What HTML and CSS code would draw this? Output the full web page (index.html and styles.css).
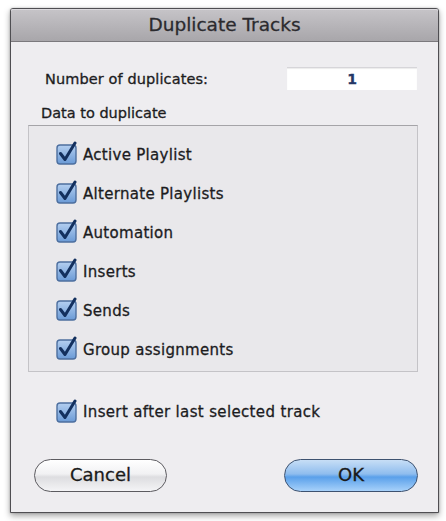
FILE: index.html
```html
<!DOCTYPE html>
<html>
<head>
<meta charset="utf-8">
<link rel="stylesheet" href="styles.css">
</head>
<body>
<div class="window">
  <div class="titlebar">Duplicate Tracks</div>
  <div class="content">
    <div class="num-row">
      <span class="num-label">Number of duplicates:</span>
      <div class="num-input">1</div>
    </div>
    <div class="section-label">Data to duplicate</div>
    <div class="group">
      <div class="check-row"><svg class="cb" viewBox="0 0 22 24" width="22" height="24"><defs><linearGradient id="g1" x1="0" y1="0" x2="0" y2="1"><stop offset="0" stop-color="#b4cff0"/><stop offset="1" stop-color="#6a9ad6"/></linearGradient></defs><rect x="1" y="4" width="19" height="19" rx="3" fill="url(#g1)" stroke="#4d6f9f" stroke-width="1.4"/><path d="M4.5 12.5 L9 18.5 L19 2" fill="none" stroke="#13305e" stroke-width="3" stroke-linecap="round" stroke-linejoin="round"/></svg><span>Active Playlist</span></div>
      <div class="check-row"><svg class="cb" viewBox="0 0 22 24" width="22" height="24"><rect x="1" y="4" width="19" height="19" rx="3" fill="url(#g1)" stroke="#4d6f9f" stroke-width="1.4"/><path d="M4.5 12.5 L9 18.5 L19 2" fill="none" stroke="#13305e" stroke-width="3" stroke-linecap="round" stroke-linejoin="round"/></svg><span>Alternate Playlists</span></div>
      <div class="check-row"><svg class="cb" viewBox="0 0 22 24" width="22" height="24"><rect x="1" y="4" width="19" height="19" rx="3" fill="url(#g1)" stroke="#4d6f9f" stroke-width="1.4"/><path d="M4.5 12.5 L9 18.5 L19 2" fill="none" stroke="#13305e" stroke-width="3" stroke-linecap="round" stroke-linejoin="round"/></svg><span>Automation</span></div>
      <div class="check-row"><svg class="cb" viewBox="0 0 22 24" width="22" height="24"><rect x="1" y="4" width="19" height="19" rx="3" fill="url(#g1)" stroke="#4d6f9f" stroke-width="1.4"/><path d="M4.5 12.5 L9 18.5 L19 2" fill="none" stroke="#13305e" stroke-width="3" stroke-linecap="round" stroke-linejoin="round"/></svg><span>Inserts</span></div>
      <div class="check-row"><svg class="cb" viewBox="0 0 22 24" width="22" height="24"><rect x="1" y="4" width="19" height="19" rx="3" fill="url(#g1)" stroke="#4d6f9f" stroke-width="1.4"/><path d="M4.5 12.5 L9 18.5 L19 2" fill="none" stroke="#13305e" stroke-width="3" stroke-linecap="round" stroke-linejoin="round"/></svg><span>Sends</span></div>
      <div class="check-row"><svg class="cb" viewBox="0 0 22 24" width="22" height="24"><rect x="1" y="4" width="19" height="19" rx="3" fill="url(#g1)" stroke="#4d6f9f" stroke-width="1.4"/><path d="M4.5 12.5 L9 18.5 L19 2" fill="none" stroke="#13305e" stroke-width="3" stroke-linecap="round" stroke-linejoin="round"/></svg><span>Group assignments</span></div>
    </div>
    <div class="check-row insert-row"><svg class="cb" viewBox="0 0 22 24" width="22" height="24"><rect x="1" y="4" width="19" height="19" rx="3" fill="url(#g1)" stroke="#4d6f9f" stroke-width="1.4"/><path d="M4.5 12.5 L9 18.5 L19 2" fill="none" stroke="#13305e" stroke-width="3" stroke-linecap="round" stroke-linejoin="round"/></svg><span class="small">Insert after last selected track</span></div>
    <div class="buttons">
      <div class="btn cancel">Cancel</div>
      <div class="btn ok">OK</div>
    </div>
  </div>
</div>
</body>
</html>
```
FILE: styles.css
```css
html, body {
  margin: 0;
  padding: 0;
  background: #ffffff;
}
body {
  font-family: "DejaVu Sans", "Liberation Sans", sans-serif;
  color: #1c1c1e;
  width: 446px;
  height: 521px;
  overflow: hidden;
  -webkit-text-stroke: 0.3px currentColor;
}
.window {
  margin: 8px 0 0 10px;
  width: 427px;
  height: 503px;
  border: 1px solid #4f4e52;
  border-radius: 3px 3px 0 0;
  background: #eeedf0;
  box-shadow: 0 3px 6px rgba(0,0,0,0.35), 0 0 2px rgba(0,0,0,0.25);
  display: flex;
  flex-direction: column;
}
.titlebar {
  height: 32px;
  line-height: 32px;
  text-align: center;
  font-size: 18.5px;
  color: #2b2a2e;
  background: linear-gradient(#c6c4c8, #a8a6aa);
  border-bottom: 1px solid #7b797d;
  border-radius: 2px 2px 0 0;
  box-shadow: inset 0 1px 0 #dcdade;
}
.content {
  display: flex;
  flex-direction: column;
  flex: 1;
}
.num-row {
  display: flex;
  align-items: center;
  margin-top: 25px;
  height: 23px;
}
.num-label {
  margin-left: 34px;
  font-size: 14.5px;
  letter-spacing: 0.1px;
}
.num-input {
  margin-left: auto;
  margin-right: 21px;
  width: 130px;
  height: 23px;
  line-height: 23px;
  background: #ffffff;
  border-top: 1px solid #d6d5d9;
  box-sizing: border-box;
  text-align: center;
  font-size: 14px;
  font-weight: bold;
  color: #253766;
  box-shadow: inset 0 1px 1px rgba(0,0,0,0.08);
}
.section-label {
  margin-top: 14px;
  margin-left: 30px;
  height: 18px;
  line-height: 18px;
  font-size: 14.5px;
}
.group {
  margin-top: 3px;
  margin-left: 17px;
  width: 390px;
  height: 247px;
  box-sizing: border-box;
  border: 1px solid #c4c3c7;
  border-top-color: #a5a4a8;
  background: #e9e8eb;
  padding-top: 9px;
  padding-left: 28px;
  display: flex;
  flex-direction: column;
}
.check-row {
  display: flex;
  align-items: center;
  height: 39px;
  font-size: 15px;
  letter-spacing: 0.3px;
}
.cb {
  flex: none;
  margin-left: -1px;
  margin-top: -3px;
  margin-right: 5px;
  -webkit-text-stroke: 0;
}
.insert-row {
  margin-top: 29px;
  margin-left: 46px;
  height: 22px;
}
.small {
  font-size: 15px;
  letter-spacing: 0.35px;
}
.buttons {
  display: flex;
  justify-content: space-between;
  margin-top: 36px;
  margin-left: 23px;
  margin-right: 20px;
}
.btn {
  height: 33px;
  box-sizing: border-box;
  border-radius: 17px;
  text-align: center;
  line-height: 30px;
  font-size: 18px;
  color: #1a1a1a;
}
.cancel {
  width: 133px;
  border: 1.5px solid #5c5b60;
  background: linear-gradient(#ffffff 0%, #f1f1f3 45%, #dddde0 55%, #f4f4f6 100%);
}
.ok {
  width: 134px;
  border: 1.5px solid #3d5270;
  background: linear-gradient(#c7def6 0%, #8fbdee 45%, #5aa0ea 55%, #a7d1fa 100%);
}
```
